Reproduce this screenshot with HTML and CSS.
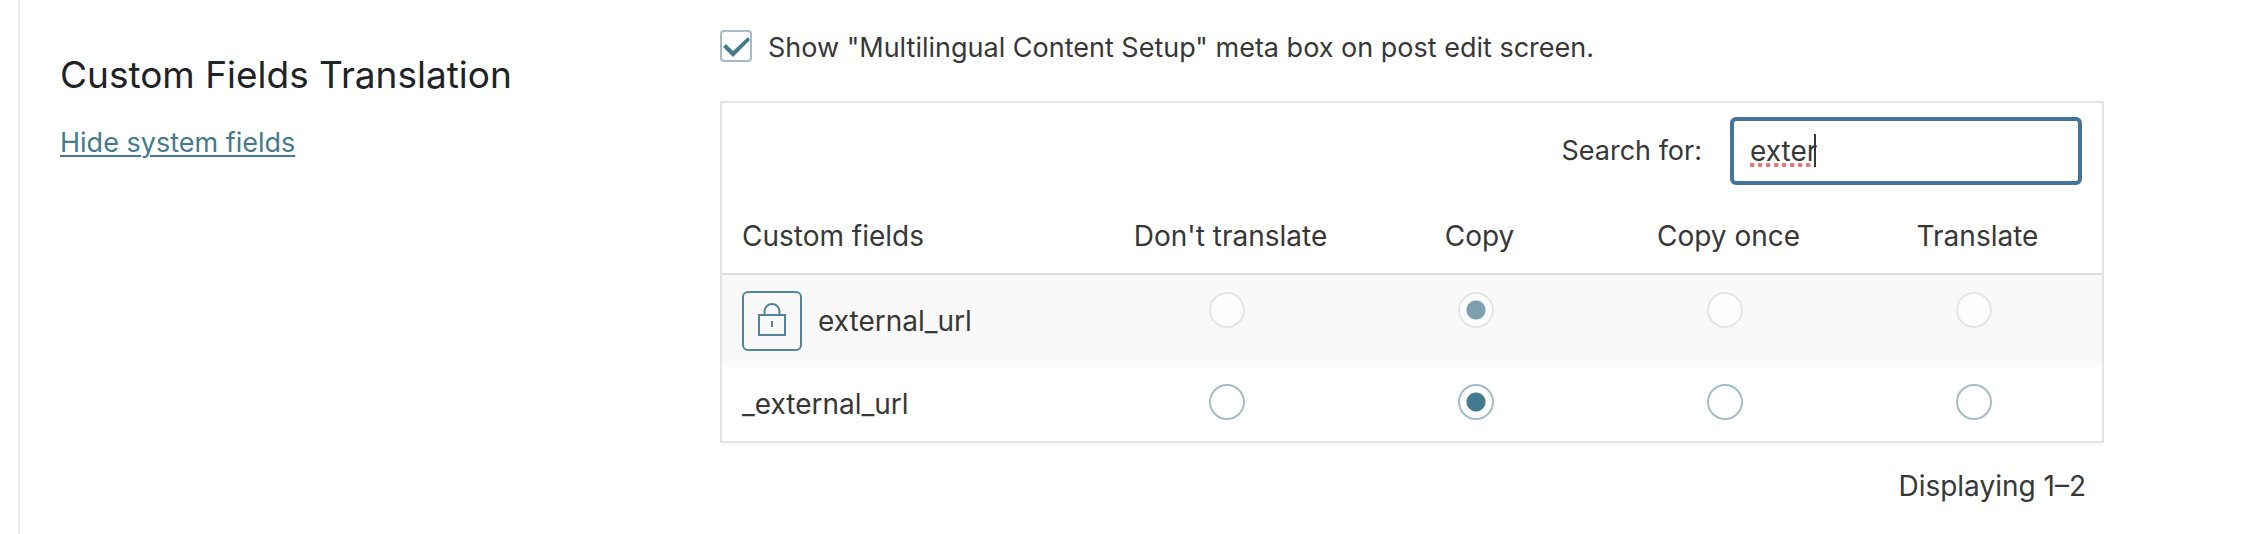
FILE: index.html
```html
<!DOCTYPE html>
<html lang="en">
<head>
    <meta charset="UTF-8">
    <meta name="viewport" content="width=device-width, initial-scale=1.0">
    <title>Custom Fields Translation</title>
    <link rel="stylesheet" href="styles.css">
</head>
<body>
    <section class="section">
        <div class="section-header">
            <h2>Custom Fields Translation</h2>
            <a href="#">Hide system fields</a>
        </div>
        <div class="section-content">
            <div class="option">
                <input type="checkbox" id="show-meta-box" checked>
                <label for="show-meta-box">Show "Multilingual Content Setup" meta box on post edit screen.</label>
            </div>
            <div class="fields-box">
                <div class="search">
                    <label for="search">Search for:</label>
                    <div class="search-field">
                        <input type="text" id="search" value="exter">
                        <span class="spelling"></span>
                    </div>
                </div>
                <table class="fields">
                    <thead>
                        <tr>
                            <th scope="col" class="name">Custom fields</th>
                            <th scope="col">Don't translate</th>
                            <th scope="col">Copy</th>
                            <th scope="col">Copy once</th>
                            <th scope="col">Translate</th>
                        </tr>
                    </thead>
                    <tbody>
                        <tr class="locked">
                            <td class="name">
                                <div class="name-inner">
                                    <button type="button" class="lock" aria-label="Unlock external_url">
                                        <svg width="28" height="34" viewBox="0 0 28 34" fill="none" stroke="currentColor" stroke-width="2">
                                            <rect x="1" y="12" width="26" height="20"/>
                                            <path d="M6.500 12V8.500a7.500 7.500 0 0 1 15 0V12"/>
                                            <path d="M14 18v6"/>
                                        </svg>
                                    </button>
                                    <span>external_url</span>
                                </div>
                            </td>
                            <td><input type="radio" name="external_url" aria-label="Don't translate" disabled></td>
                            <td><input type="radio" name="external_url" aria-label="Copy" checked disabled></td>
                            <td><input type="radio" name="external_url" aria-label="Copy once" disabled></td>
                            <td><input type="radio" name="external_url" aria-label="Translate" disabled></td>
                        </tr>
                        <tr>
                            <td class="name">_external_url</td>
                            <td><input type="radio" name="_external_url" aria-label="Don't translate"></td>
                            <td><input type="radio" name="_external_url" aria-label="Copy" checked></td>
                            <td><input type="radio" name="_external_url" aria-label="Copy once"></td>
                            <td><input type="radio" name="_external_url" aria-label="Translate"></td>
                        </tr>
                    </tbody>
                </table>
            </div>
            <p class="displaying">Displaying 1–2</p>
        </div>
    </section>
</body>
</html>
```

FILE: styles.css
```css
* {
    box-sizing: border-box;
}
body {
    margin: 0;
    background: #fff;
    color: #373737;
    font-family: Inter, "Liberation Sans", sans-serif;
    font-size: 28px;
    line-height: 42px;
}
.section {
    display: grid;
    grid-template-columns: 660px 1fr;
    min-height: 100vh;
    margin-left: 18px;
    padding: 27px 138px 0 40px;
    border-left: 2px solid #ebebeb;
}
.section-header {
    padding-top: 20px;
}
.section-header h2 {
    margin: 0 0 18px;
    color: #1d2327;
    font-size: 37px;
    font-weight: 400;
    line-height: 56px;
}
.section-header a {
    color: #447a8e;
    font-size: 27px;
    text-decoration-thickness: 2px;
    text-underline-offset: 3px;
}
.option {
    display: flex;
    align-items: flex-start;
    gap: 16px;
    margin-bottom: 32px;
}
.option label {
    font-size: 27px;
}
input {
    appearance: none;
    margin: 0;
    background: #fff;
}
input[type="checkbox"] {
    position: relative;
    width: 32px;
    height: 32px;
    margin-top: 3px;
    border: 2px solid #a3bcc7;
    border-radius: 4px;
}
input[type="checkbox"]:checked::before {
    content: "";
    position: absolute;
    left: 1px;
    top: 5px;
    width: 28px;
    height: 22px;
    background: #447a8e;
    clip-path: polygon(3px 7px, 10px 14px, 25px 0, 27px 3px, 10px 20px, 0 10px);
}
.fields-box {
    border: 2px solid #e3e3e3;
    box-shadow: 0 2px 2px rgba(0, 0, 0, 0.04);
}
.search {
    display: flex;
    justify-content: flex-end;
    align-items: center;
    gap: 28px;
    padding: 14px 20px;
}
.search label {
    font-size: 27px;
}
.search-field {
    position: relative;
}
.search-field input {
    display: block;
    width: 352px;
    height: 68px;
    padding: 0 16px;
    border: 4px solid #45749a;
    border-radius: 6px;
    color: #373737;
    font: inherit;
    outline: none;
}
/* spell check dots and the text caret */
.spelling {
    position: absolute;
    left: 20px;
    top: 17px;
    width: 66px;
    height: 33px;
    border-right: 2px solid #373737;
    background: radial-gradient(circle at 2px 2px, #e07a78 0 2px, transparent 3px) 0 bottom / 8px 4px repeat-x;
}
.fields {
    width: 100%;
    table-layout: fixed;
    border-collapse: separate;
    border-spacing: 0;
}
.fields th {
    width: 249px;
    padding: 16px 0;
    border-bottom: 2px solid #dfdfdf;
    font-weight: 400;
}
.fields td {
    padding: 16px 0;
    text-align: center;
    vertical-align: top;
}
.fields .name {
    width: auto;
    padding-left: 20px;
    text-align: left;
}
.locked {
    background: #f9f9f9;
}
.name-inner {
    display: flex;
    align-items: center;
    gap: 16px;
}
.lock {
    display: flex;
    justify-content: center;
    align-items: flex-start;
    width: 60px;
    height: 60px;
    padding: 10px 0 0;
    border: 2px solid #52859a;
    border-radius: 6px;
    background: transparent;
    color: #52859a;
}
input[type="radio"] {
    width: 36px;
    height: 36px;
    margin: 1px 8px 0 0;
    border: 2px solid #a3bcc7;
    border-radius: 50%;
    vertical-align: top;
}
input[type="radio"]:checked {
    background: radial-gradient(circle, #447a8e 9px, #fff 10px);
}
input[type="radio"]:disabled {
    border-color: #e5e5e5;
    background: #fdfdfd;
}
input[type="radio"]:disabled:checked {
    background: radial-gradient(circle, #7ca0b0 9px, #fdfdfd 10px);
}
.displaying {
    margin: 22px 18px 0 0;
    text-align: right;
}
```
